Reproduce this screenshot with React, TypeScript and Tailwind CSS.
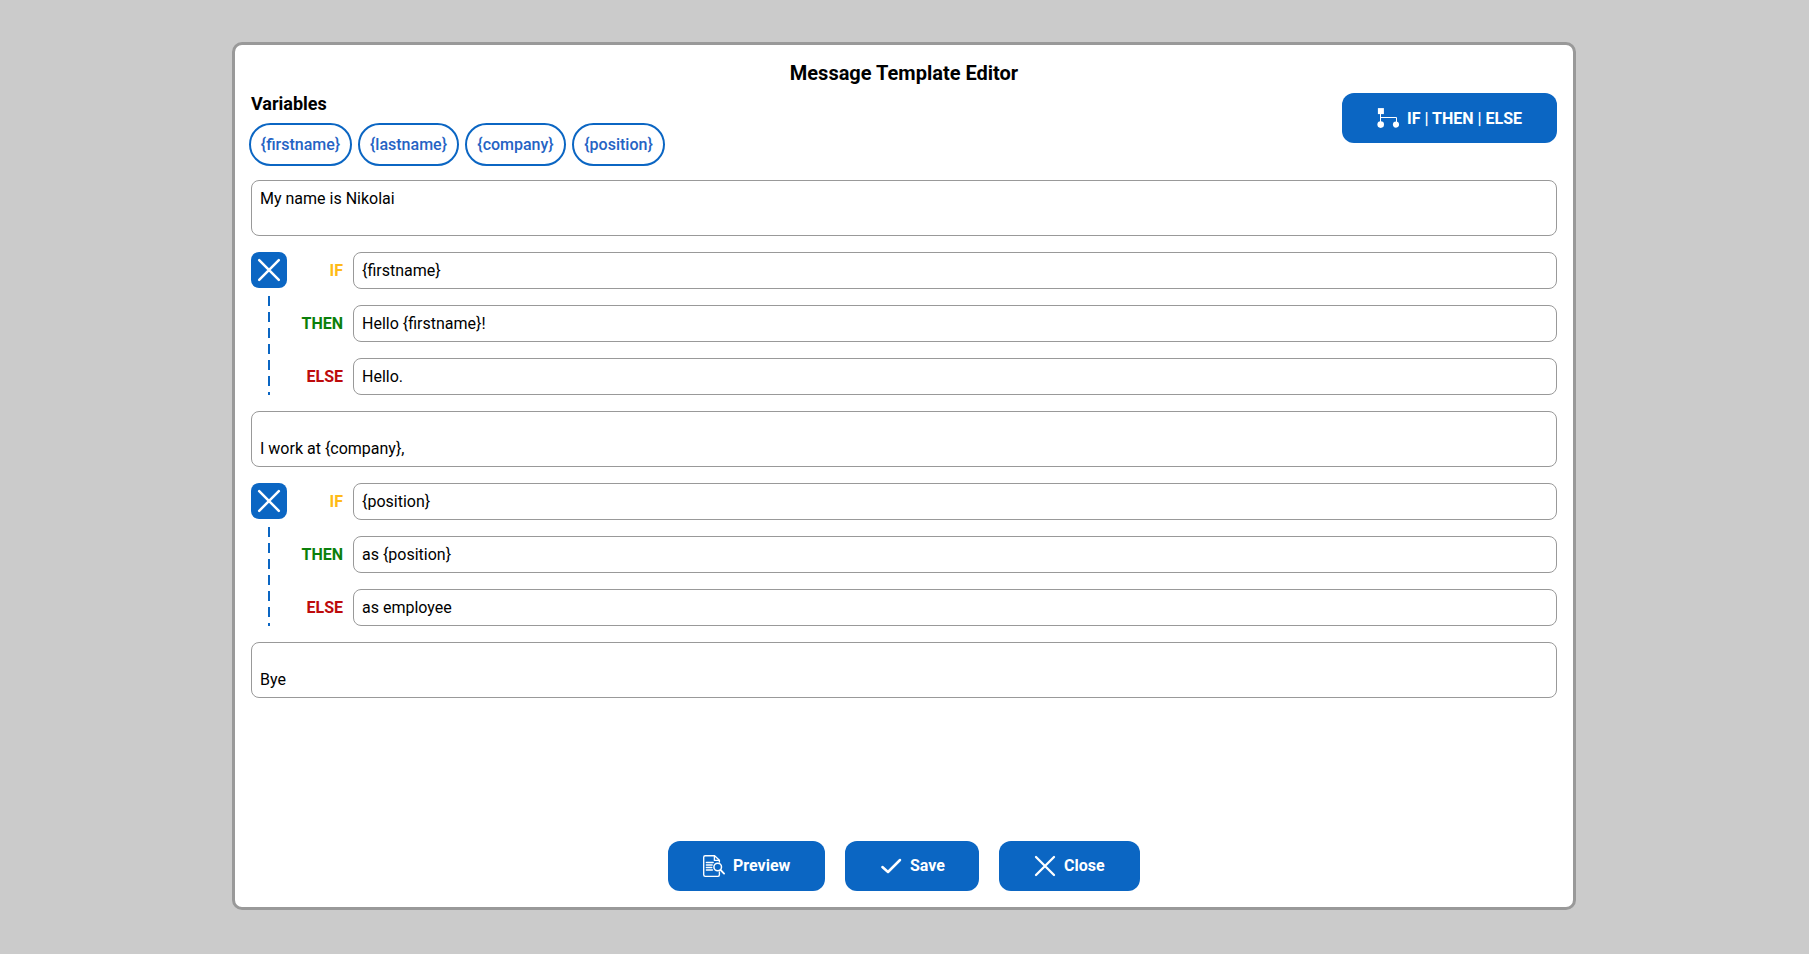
import type { ReactNode } from "react";

const variables = [
  { name: "{firstname}", width: "w-[103px]" },
  { name: "{lastname}", width: "w-[101px]" },
  { name: "{company}", width: "w-[101px]" },
  { name: "{position}", width: "w-[93px]" },
];

function CrossIcon({ size }: { size: number }) {
  return (
    <svg width={size} height={size} viewBox="0 0 22 22" fill="none" stroke="white" strokeWidth="2.3" strokeLinecap="round">
      <path d="M2 2 20 20M20 2 2 20" />
    </svg>
  );
}

function CheckIcon() {
  return (
    <svg width="22" height="22" viewBox="0 0 22 22" fill="none" stroke="white" strokeWidth="2.5" strokeLinecap="round" strokeLinejoin="round">
      <path d="M2.4 12 8 17 20 5" />
    </svg>
  );
}

function PreviewIcon() {
  return (
    <svg width="22" height="22" viewBox="0 0 22 22" fill="none" stroke="white" strokeWidth="1.35" strokeLinecap="round" strokeLinejoin="round">
      <path d="M16.4 7V5.2L11.6.7H2.2Q.7.7.7 2.2V19.8Q.7 21.3 2.2 21.3H15Q16.4 21.3 16.4 19.8V17" />
      <path d="M11.4.9V5.4H16.2" />
      <path d="M3.4 7.5H10.2M3.4 10H9.2M3.4 12.5H8.8M3.4 15H9.4" />
      <circle cx="14.7" cy="12" r="3.8" strokeWidth="1.5" />
      <path d="M17.6 15 21.1 18.6" strokeWidth="1.8" />
    </svg>
  );
}

function BranchIcon() {
  return (
    <svg width="22" height="22" viewBox="0 0 22 22" fill="white">
      <rect x="0.9" y="1.1" width="6" height="6" />
      <path d="M3.5 7V15M3.5 10.5H19.5V15" fill="none" stroke="white" strokeWidth="1" />
      <circle cx="3.7" cy="17.6" r="3.3" />
      <circle cx="19" cy="17.6" r="3.1" />
    </svg>
  );
}

function ActionButton({ icon, label, className, labelClass = "" }: { icon: ReactNode; label: string; className: string; labelClass?: string }) {
  return (
    <button className={`flex h-[50px] items-center rounded-xl bg-[#0b66c3] pl-[35px] text-base font-bold text-white ${className}`}>
      {icon}
      <span className={`ml-2 whitespace-nowrap ${labelClass}`}>{label}</span>
    </button>
  );
}

function TextBlock({ text }: { text: string }) {
  return (
    <div className="h-14 shrink-0 whitespace-pre-wrap rounded-lg border border-[#999] px-2 py-2 leading-[19px]">{text}</div>
  );
}

function Field({ label, color, value }: { label: string; color: string; value: string }) {
  return (
    <div className="flex h-[37px] items-center">
      <span className={`w-[56px] text-right font-bold ${color}`}>{label}</span>
      <div className="ml-[10px] flex h-full flex-1 items-center rounded-lg border border-[#999] px-2">{value}</div>
    </div>
  );
}

function Condition({ values }: { values: [string, string, string] }) {
  return (
    <div className="flex h-[143px] shrink-0">
      <div className="flex w-9 flex-col items-center">
        <button className="flex size-9 items-center justify-center rounded-lg bg-[#0b66c3]">
          <CrossIcon size={24} />
        </button>
        <div className="mt-2 w-0.5 flex-1 bg-[repeating-linear-gradient(to_bottom,#0b66c3_0_10px,transparent_10px_16px)]" />
      </div>
      <div className="flex flex-1 flex-col gap-4">
        <Field label="IF" color="text-[#ffba17]" value={values[0]} />
        <Field label="THEN" color="text-[#0b800b]" value={values[1]} />
        <Field label="ELSE" color="text-[#bd0b0b]" value={values[2]} />
      </div>
    </div>
  );
}

export default function App() {
  return (
    <div className="flex h-[954px] w-[1809px] justify-center bg-[#cbcbcb] pt-[42px] font-[Roboto,sans-serif] text-base text-black">
      <main className="mr-px flex h-[868px] w-[1344px] flex-col rounded-[10px] border-3 border-[#999] bg-white px-4 pb-4">
        <h1 className="mt-4 text-center text-xl leading-6 font-bold">Message Template Editor</h1>
        <div className="mt-2 flex h-[73px] justify-between">
          <div>
            <h2 className="text-[18px] leading-[21px] font-bold">Variables</h2>
            <div className="mt-[9px] -ml-0.5 flex gap-1.5">
              {variables.map((v) => (
                <button key={v.name} className={`h-[43px] rounded-[22px] border-2 border-[#0b66c3] text-center font-medium text-[#2563c4] ${v.width}`}>
                  {v.name}
                </button>
              ))}
            </div>
          </div>
          <ActionButton icon={<BranchIcon />} label="IF | THEN | ELSE" className="w-[215px]" labelClass="pt-0.5" />
        </div>
        <div className="mt-[14px] flex flex-1 flex-col gap-4">
          <TextBlock text="My name is Nikolai" />
          <Condition values={["{firstname}", "Hello {firstname}!", "Hello."]} />
          <TextBlock text={"\nI work at {company},"} />
          <Condition values={["{position}", "as {position}", "as employee"]} />
          <TextBlock text={"\nBye"} />
        </div>
        <div className="flex justify-center gap-5">
          <ActionButton icon={<PreviewIcon />} label="Preview" className="w-[157px]" />
          <ActionButton icon={<CheckIcon />} label="Save" className="w-[134px]" />
          <ActionButton icon={<CrossIcon size={22} />} label="Close" className="w-[141px]" />
        </div>
      </main>
    </div>
  );
}
